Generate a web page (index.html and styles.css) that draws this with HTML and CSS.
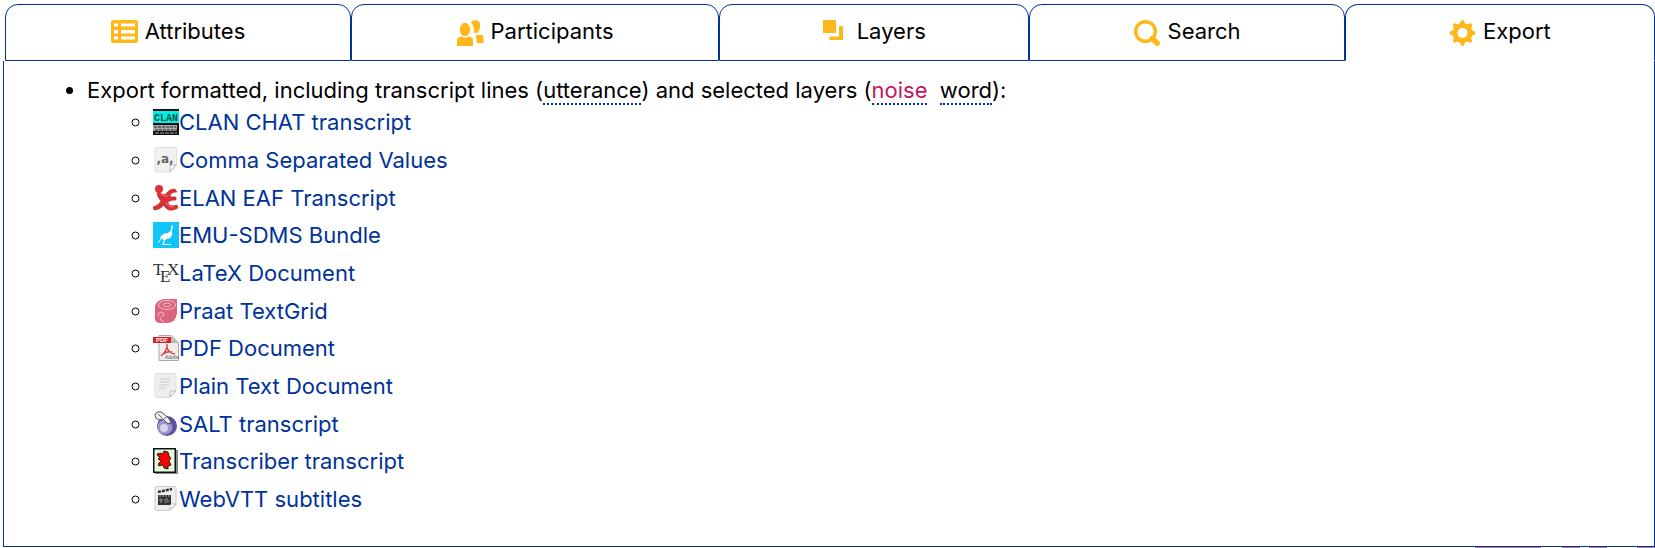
FILE: index.html
```html
<!DOCTYPE html>
<html lang="en">
<head>
<meta charset="utf-8">
<title>Export</title>
<link rel="stylesheet" href="styles.css">
</head>
<body>
<nav class="tabs">
  <a class="tab tab-attributes" href="#attributes"><svg class="tab-icon" viewBox="0 0 27 26"><rect width="27" height="23" rx="2.5" fill="#ffb81c"/><path d="M3 3.5h4v3H3zM10 3.5h14v3H10zM3 10h4v3.500H3zM10 10h14v3.500H10zM3 16.500h4v3H3zM10 16.500h14v3H10z" fill="#fff"/></svg>Attributes</a>
  <a class="tab tab-participants" href="#participants"><svg class="tab-icon" viewBox="0 0 27 26" fill="#ffb81c"><path d="M14 2C16 0 19-.5 21.500 1c2.500 2 2 7 0 10.500-1 1.500-3 2-4.500 1C17 9 16.500 5 14 2z"/><ellipse cx="8" cy="9.500" rx="5.200" ry="6.800"/><path d="M0 26v-5c0-3 1.500-4.500 4.500-4.500 2 1.500 5 1.500 7 0 3 0 4.500 1.500 4.500 4.500v5zM20 14.500c1 1 3 .5 4 0 2 .5 2.500 2 2.500 4V23H19.500c0-3 .5-5-1-6.500z"/></svg>Participants</a>
  <a class="tab tab-layers" href="#layers"><svg class="tab-icon" viewBox="0 0 27 26" fill="#ffb81c"><path d="M0 0h13v13H0zM16 6h4v14H6.500v-3.500H16z"/></svg>Layers</a>
  <a class="tab tab-search" href="#search"><svg class="tab-icon" viewBox="0 0 27 26" fill="none" stroke="#ffb81c"><circle cx="11.500" cy="11.500" r="9.800" stroke-width="3.400"/><path d="M18.500 18.500l4.800 4.700" stroke-width="5.500" stroke-linecap="round"/></svg>Search</a>
  <a class="tab tab-export active" href="#export" aria-current="page"><svg class="tab-icon" viewBox="0 0 27 26"><g fill="#ffb81c"><circle cx="13.500" cy="13" r="10"/><path id="tooth" d="M10.500 5l1.300-4q1.700-2 3.400 0l1.300 4zM10.500 21l1.300 4q1.700 2 3.400 0l1.300-4z"/><use href="#tooth" transform="rotate(45 13.500 13)"/><use href="#tooth" transform="rotate(90 13.500 13)"/><use href="#tooth" transform="rotate(135 13.500 13)"/></g><circle cx="13.500" cy="13" r="5" fill="#fff"/></svg>Export</a>
</nav>
<main class="panel">
  <ul class="exports">
    <li>Export formatted, including transcript lines (<span class="layer">utterance</span>) and selected layers (<span class="layer noise">noise</span>&nbsp; <span class="layer">word</span>):
      <ul class="formats">
        <li><a href="#chat"><svg class="icon" viewBox="0 0 26 26"><path fill="#111" d="M0 0h26v26H0z"/><path fill="#0ee" d="M0 2h26v12H0z"/><text x="13" y="11.500" text-anchor="middle" font-family="Liberation Mono, monospace" font-weight="bold" font-size="10" fill="#053">CLAN</text><path fill="#aaa" d="M0 16h24v6H0z"/><path stroke="#222" stroke-dasharray="3 1" d="M1 18h22M2 21h22"/><path stroke="#aaa" stroke-dasharray="4 1" d="M2 24h22"/></svg>CLAN CHAT transcript</a></li>
        <li><a href="#csv"><svg class="icon" viewBox="0 0 26 26"><path fill="#f1f1ef" stroke="#ddd" d="M4 .5h17q2.500 0 2.500 2.500v15l-6 7H4q-2-.5-2-2V3Q2 .5 4 .5z"/><path d="M23 18l-6 7v-5q0-2 2-2z" fill="#fff" stroke="#bbb"/><text x="12" y="16" text-anchor="middle" font-family="DejaVu Sans, sans-serif" font-weight="bold" font-size="12" fill="#666">,a,</text></svg>Comma Separated Values</a></li>
        <li><a href="#eaf"><svg class="icon" viewBox="0 0 26 26"><path d="M5 6q5 5 8 3 3-5 9-5l2 3q-6 0-7 4 0 1 6 1v3q-8 0-8 3 1 4 9 2l1 3q-7 4-11 1-3-2-3-4-4 5-10 5l-1-3q6-2 8-6-3-3-4-7z" fill="#d92e35" stroke="#b5323a" stroke-width=".6"/><circle cx="6" cy="4" r="4" fill="#df3238"/><path d="M8 9q4 4 8 1M13 17q1 5 8 5" fill="none" stroke="#f07878"/></svg>ELAN EAF Transcript</a></li>
        <li><a href="#emu"><svg class="icon" viewBox="0 0 26 26"><path fill="#0fc5fa" d="M0 0h26v26H0z"/><path d="M20 4l-1 5q1 7-5 8l-2 1-1 4h7v1H9l2-5-4-2q2-5 8-5l3-3V5z" fill="#fff"/><path d="M10 14l-5 7M19 3v3" stroke="#fff"/></svg>EMU-SDMS Bundle</a></li>
        <li><a href="#latex"><svg class="icon" viewBox="0 0 26 26" font-family="Liberation Serif, serif" font-size="17" fill="#333"><text x="0" y="15">T</text><text x="7" y="22">E</text><text x="14" y="15">X</text></svg>LaTeX Document</a></li>
        <li><a href="#textgrid"><svg class="icon" viewBox="0 0 26 26"><path d="M11 1h13v14q-1 10-11 10H6q-5-1-4-7V9q1-7 9-8z" fill="#d9647d"/><g fill="none" stroke="#f7b9c5"><ellipse cx="14" cy="7" rx="8.500" ry="4.500"/><ellipse cx="14" cy="7" rx="4" ry="1.800"/><path d="M5 18q0-4 3-4t3 3q-1 2-3 1M7 19q0 4 4 5"/></g></svg>Praat TextGrid</a></li>
        <li><a href="#pdf"><svg class="icon" viewBox="0 0 26 26"><path d="M6 .5h12l7.500 7.500v17.500H6z" fill="#eee" stroke="#aaa"/><path d="M18 0l8 8h-8z" fill="#bbb"/><path fill="#d9201f" d="M0 2h18v6H0z"/><text x="9" y="7" text-anchor="middle" font-family="Liberation Sans, sans-serif" font-weight="bold" font-size="6" fill="#fff">PDF</text><path d="M14 9q1 6-6 12M14 12q1 6 8 7M10 19q4-3 9-2" fill="none" stroke="#dd3434" stroke-width="1.300"/><text x="12" y="24" font-family="Liberation Sans, sans-serif" font-size="5" fill="#555">Adobe</text></svg>PDF Document</a></li>
        <li><a href="#text"><svg class="icon" viewBox="0 0 26 26"><path fill="#eee" stroke="#ddd" d="M4 .5h17q2 0 2 2v16l-6 6H4q-2 0-2-2v-20q0-2 2-2z"/><path d="M23 18l-6 6v-4q0-2 2-2z" fill="#fafafa" stroke="#bbb"/><path d="M7 6h10M6 9h12M6 12h10M6 15h7" stroke="#ccc"/></svg>Plain Text Document</a></li>
        <li><a href="#salt"><svg class="icon" viewBox="0 0 26 26"><circle cx="14" cy="15" r="10" fill="#5c51a4"/><circle cx="12" cy="16" r="7.500" fill="#9c94ca"/><circle cx="11" cy="17" r="4" fill="#d6d3ea"/><path d="M3 2q4-3 8 1l6 6 1 4-4-1-4-4q-5 2-7-1-2-3 0-5z" fill="#eee" stroke="#555"/><path d="M5 3l4 4M11 8l3-3" stroke="#666"/></svg>SALT transcript</a></li>
        <li><a href="#transcriber"><svg class="icon" viewBox="0 0 26 26"><path fill="#888" d="M2 2h23v24H2z"/><path fill="#e4fcdc" stroke="#111" stroke-width="1.500" d="M.75.750h21.500v23.500H.75z"/><path d="M4 6l4-1 1 2 2-4 4 1 1 4 2 2-2 3 2 4-3 1v3l-4-1-1-3-4 1-1-2 3-3-3-2 2-2-2-1z" fill="#f00" stroke="#222"/></svg>Transcriber transcript</a></li>
        <li><a href="#webvtt"><svg class="icon" viewBox="0 0 26 26"><path fill="#eee" stroke="#ccc" d="M4 .5h17q2 0 2 2v16l-6 6H4q-2 0-2-2v-20q0-2 2-2z"/><path d="M5 9h13v10H5z" fill="#333"/><path d="M5 6l14-3" stroke="#333" stroke-width="2.500" stroke-dasharray="3 1"/><path d="M6 10h11M7 13v3h2v-3zM12 13v3h3v-3z" stroke="#aaa" fill="none" stroke-dasharray="2 1"/><path d="M23 18l-6 6v-4q0-2 2-2z" fill="#fff" stroke="#bbb"/></svg>WebVTT subtitles</a></li>
      </ul>
    </li>
  </ul>
</main>
<footer class="footer"><span class="mark mark-wide"></span><span class="mark"></span><span class="mark"></span><span class="mark mark-end"></span></footer>
</body>
</html>
```
FILE: styles.css
```css
* {
  box-sizing: border-box;
}
body {
  margin: 0;
  padding: 4px 0 0 3px;
  background: #fff;
  color: #000;
  font: 22px/32px Inter, "Open Sans", sans-serif;
}
.tabs {
  display: flex;
  padding-left: 2px;
}
.tab {
  display: flex;
  flex: 310 1 0;
  justify-content: center;
  align-items: flex-start;
  gap: 7px;
  height: 57px;
  padding-top: 10px;
  border: 1px solid #039;
  border-radius: 13px 13px 0 0;
  color: #000;
  text-decoration: none;
}
.tab-attributes {
  flex-grow: 346;
}
.tab-participants {
  flex-grow: 368;
}
.tab-search {
  flex-grow: 315;
}
.active {
  border-bottom-color: transparent;
}
.tab-icon {
  width: 27px;
  height: 26px;
  margin-top: 5px;
}
.panel {
  border: 1px solid #039;
  border-top: 0;
  padding: 13px 0 22px;
}
.exports,
.formats {
  margin: 0;
}
.exports {
  padding-left: 83px;
}
.layer {
  border-bottom: 2px dotted #039;
}
.noise {
  color: #c2185b;
}
.formats {
  display: grid;
  grid-auto-rows: 38px 38px 37px;
  padding-left: 66px;
  padding-top: 3px;
  line-height: 26px;
}
.formats a {
  color: #039;
  text-decoration: none;
}
.icon {
  width: 26px;
  height: 26px;
  vertical-align: top;
}
.footer {
  display: flex;
  justify-content: flex-end;
  height: 1px;
}
.mark {
  width: 18px;
  margin-right: 9px;
  background: #c77c84;
}
.mark-wide {
  width: 66px;
  margin-right: 21px;
}
.mark-end {
  margin: 0 0 0 21px;
}
```
